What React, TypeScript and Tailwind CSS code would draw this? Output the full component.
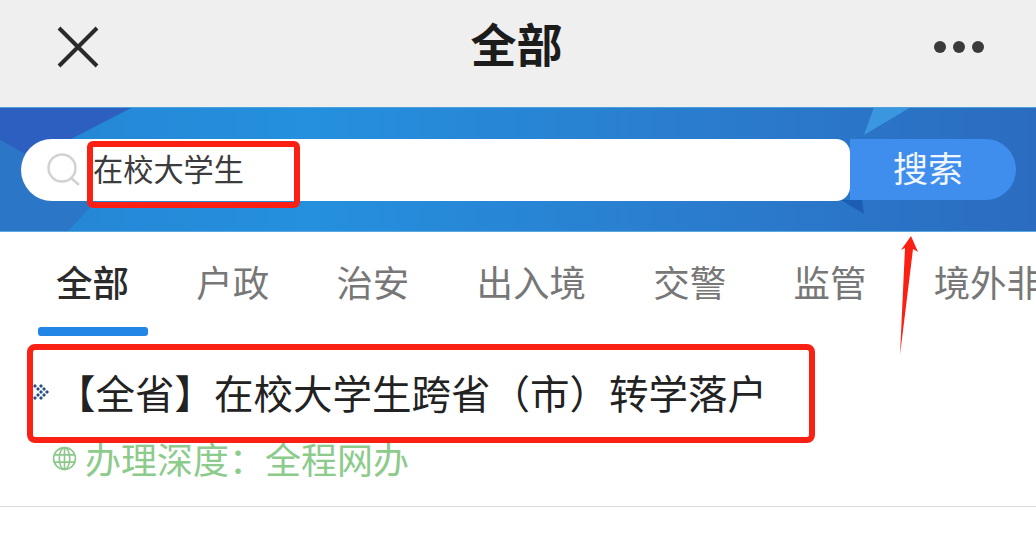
const cjk = { fontFamily: '"Noto Sans CJK SC", "Liberation Sans", sans-serif' };

function BannerArt() {
  return (
    <svg className="absolute inset-0 h-full w-full" viewBox="0 0 1036 125" preserveAspectRatio="none">
      <defs>
        <linearGradient id="bg" x1="0" y1="0" x2="1" y2="0">
          <stop offset="0" stopColor="#2585d4" />
          <stop offset="0.3" stopColor="#2490de" />
          <stop offset="0.62" stopColor="#2a7fd0" />
          <stop offset="1" stopColor="#2b6cc0" />
        </linearGradient>
      </defs>
      <rect width="1036" height="125" fill="url(#bg)" />
      <polygon points="0,0 133,0 75,30 30,50 0,33" fill="#2d5fc0" />
      <polygon points="0,33 30,50 100,90 67,125 0,125" fill="#2b76c6" />
      <polygon points="864,28 874,0 911,0" fill="#3a97df" />
      <polygon points="841,93 862,93 864,107" fill="#1b5eb3" />
      <rect width="1036" height="1" fill="#4aa0d8" />
      <rect y="124" width="1036" height="1" fill="#5aa8e0" />
    </svg>
  );
}

function DottedChevrons() {
  const dots = [
    [2, 2], [5, 5], [8, 8], [5, 11], [2, 14],
    [8, 2], [11, 5], [14, 8], [11, 11], [8, 14],
  ];
  return (
    <svg width="17" height="16" viewBox="0 0 17 16" fill="#27508c">
      {dots.map(([x, y]) => (
        <rect key={`${x}-${y}`} x={x - 1.4} y={y - 1.4} width="2.8" height="2.8" transform={`rotate(45 ${x} ${y})`} />
      ))}
    </svg>
  );
}

export default function App() {
  const tabs = ["全部", "户政", "治安", "出入境", "交警", "监管", "境外非法"];
  return (
    <div className="relative h-[550px] w-[1036px] overflow-hidden bg-white" style={cjk}>
      <header className="flex h-[107px] items-center justify-between bg-[#efefef] pb-[14px] pl-[57px] pr-[52px]">
        <svg width="42" height="42" viewBox="0 0 42 42" fill="none" stroke="#2a2a2a" strokeWidth="4">
          <path d="M2 2 L40 40 M40 2 L2 40" />
        </svg>
        <h1 className="mb-[10px] text-[46px] font-bold leading-none text-[#1c1c1c]">全部</h1>
        <div className="flex gap-[7px]">
          <span className="h-[12px] w-[12px] rounded-full bg-[#3a3a3a]" />
          <span className="h-[12px] w-[12px] rounded-full bg-[#3a3a3a]" />
          <span className="h-[12px] w-[12px] rounded-full bg-[#3a3a3a]" />
        </div>
      </header>

      <section className="relative flex h-[125px] items-center pl-[21px] pr-[20px]">
        <BannerArt />
        <div className="relative flex h-[62px] w-[829px] items-center rounded-l-[31px] rounded-r-[14px] bg-white pl-[26px]">
          <svg width="34" height="34" viewBox="0 0 34 34" fill="none" stroke="#d2d2d2" strokeWidth="2.5">
            <circle cx="15" cy="15" r="13.5" />
            <path d="M24 25 L32 32" />
          </svg>
          <span className="mb-[3px] ml-[12px] text-[30.2px] leading-none text-[#3c3c3c]">在校大学生</span>
        </div>
        <button className="relative mb-[1px] h-[61px] w-[166px] rounded-r-[31px] bg-[#3f8eee] pb-[6px] pr-[10px] text-[35px] leading-none text-[#f2f7ff]">
          搜索
        </button>
      </section>

      <nav className="flex h-[104px] gap-[67.2px] overflow-hidden whitespace-nowrap pl-[56px] pt-[26px]">
        {tabs.map((t, i) => (
          <span
            key={t}
            className={
              i === 0
                ? "shrink-0 text-[36.5px] font-medium leading-[48px] text-[#2b2b2b]"
                : "shrink-0 text-[36.5px] leading-[48px] text-[#777777]"
            }
          >
            {t}
          </span>
        ))}
      </nav>
      <div className="absolute left-[38px] top-[327px] h-[9px] w-[110px] rounded-[3px] bg-[#2186e6]" />

      <article className="h-[171px] border-b border-[#dcdcdc]">
        <div className="flex h-[104px] items-center pl-[33px] pt-[7px]">
          <DottedChevrons />
          <span className="ml-[6px] text-[39.5px] leading-none text-[#222222]">
            【全省】在校大学生跨省（市）转学落户
          </span>
        </div>
        <div className="flex items-center pl-[52px]">
          <svg width="25" height="25" viewBox="0 0 24 24" fill="none" stroke="#8cc88c" strokeWidth="1.6">
            <circle cx="12" cy="12" r="10.5" />
            <ellipse cx="12" cy="12" rx="5" ry="10.5" />
            <path d="M2 8.5h20M2 15.5h20M12 1.5v21" />
          </svg>
          <span className="ml-[8px] text-[36px] leading-none text-[#8ccb8c]">办理深度：全程网办</span>
        </div>
      </article>

      {/* red annotations */}
      <div className="absolute left-[87px] top-[141px] h-[67px] w-[213px] rounded-[6px] border-[6px] border-[#fa2014]" />
      <div className="absolute left-[27px] top-[344px] h-[99px] w-[788px] rounded-[8px] border-[6px] border-[#fa2014]" />
      <svg className="absolute left-[895px] top-[232px]" width="28" height="128" viewBox="0 0 28 128" fill="#fa2014">
        <path d="M5 123 L10 16 L6 18 L16 4 L23 20 L18 17 Z" />
      </svg>
    </div>
  );
}
